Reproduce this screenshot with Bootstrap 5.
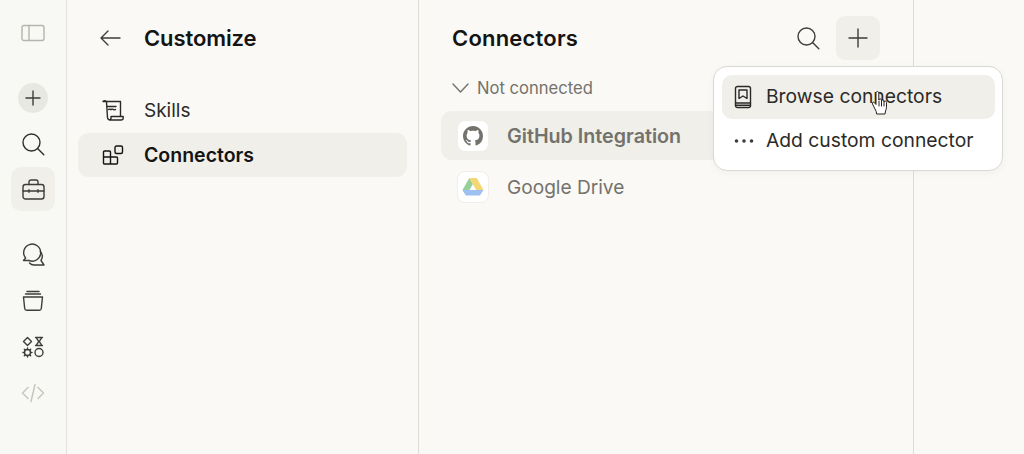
<!doctype html>
<html lang="en"><head><meta charset="utf-8"><title>Customize</title>
<link href="https://cdn.jsdelivr.net/npm/bootstrap@5.3.0/dist/css/bootstrap.min.css" rel="stylesheet">
<style>
html,body{height:100%}
body{background:#faf9f5;font-family:Inter,"Noto Sans",sans-serif;color:#1f1e1d;overflow:hidden}
svg{fill:none;stroke:currentColor;stroke-width:1.4;stroke-linecap:round;stroke-linejoin:round;display:block;flex:none}
.shell{height:454px;width:1024px}
.rail{width:67px;background:#f8f8f4;border-right:1px solid #e4e3dd;padding-top:16px;color:#3d3d3a}
.rail-slot{height:46px}
.rail-btn{width:44px;height:44px;border-radius:10px}
.rail-btn.active-rail{background:#f0efe9}
.plus-round{width:30px;height:30px;border-radius:50%;background:#e8e8e3;margin-top:34px;margin-bottom:8px}
.panel-a{width:352px;border-right:1px solid #dedcd5;padding:0 11px}
.panel-b{width:495px;border-right:1px solid #dedcd5;padding:0 33px}
.head-a{height:76px;padding-left:22px;gap:23px}
.head-title{font-size:22px;font-weight:600;color:#141413}
.title-wide{letter-spacing:.2px}
.title-tight{letter-spacing:-.1px}
.nav-row{height:44px;border-radius:11px;padding-left:24px;gap:20px;font-size:19px;color:#2b2a28;margin-bottom:1px}
.nav-row span{padding-top:2px}
.nav-row.on{background:#f0efe9;font-weight:600;color:#141413;font-size:19.500px}
.first-row{margin-top:12px}
.head-b{height:76px}
.tool-btn{width:44px;height:44px;border-radius:9px;color:#3d3d3a}
.tool-btn.on{background:#f0efe9}
.group-label{height:24px;font-size:16.600px;color:#73726c;gap:8px}
.conn{height:49px;border-radius:11px;padding-left:17px;gap:17px;font-size:19.100px;color:#73726c;margin-left:-11px;margin-right:-33px}
.conn span{padding-top:3px}
.conn.on{background:#f0efe9;font-weight:600;font-size:19.700px;margin-top:11px}
.conn.off{margin-top:2px}
.conn.off span{padding-top:1px}
.logo-box{width:32px;height:32px;border-radius:8px;background:#fff;border:1px solid #efeee9;margin-left:-1px;margin-right:1px}
.pop{position:absolute;left:713px;top:66px;width:290px;height:105px;background:#fff;border:1px solid #d9d8d2;border-radius:14px;padding:8px 7px 8px 8px;box-shadow:0 2px 8px rgba(0,0,0,.04)}
.pop-row{height:44px;border-radius:10px;padding-left:12px;font-size:19.300px;color:#2b2a28}
.pop-row.on{background:#f0efe9}
.pop-row span{margin-left:14px;padding-bottom:2px}
.pop-row.more span{margin-left:12px}
.more svg{fill:#3d3d3a;stroke:none}
.cursor{position:absolute;left:871px;top:90px;color:#222;stroke-width:1}
.cursor .hand{fill:#fff}
</style></head>
<body>
<div class="shell d-flex">
  <aside class="rail d-flex flex-column align-items-center flex-shrink-0">
    <div class="d-flex align-items-center justify-content-center" style="height:33px;color:#b5b4ae"><svg width="24" height="18" viewBox="0 0 24 18"><rect x="1" y="1.500" width="22" height="15" rx="2"/><path d="M8 1.500v15"/></svg></div>
    <div class="plus-round d-flex align-items-center justify-content-center"><svg width="16" height="16" viewBox="0 0 16 16"><path d="M8 1v14M1 8h14"/></svg></div>
    <div class="rail-slot d-flex align-items-center justify-content-center" style="color:#2f2f2c"><svg width="24" height="24" viewBox="0 0 24 24"><circle cx="10.500" cy="10.500" r="8.500"/><path d="M16.800 16.800l6 6"/></svg></div>
    <div class="rail-btn active-rail d-flex align-items-center justify-content-center"><svg width="23" height="21" viewBox="0 0 23 21"><rect x="1" y="5.500" width="21" height="14.500" rx="2.500"/><path d="M7 5.500V3a2 2 0 0 1 2-2h5a2 2 0 0 1 2 2v2.500M1 12h21M7 10.800v2.400M16 10.800v2.400"/></svg></div>
    <div class="rail-slot d-flex align-items-center justify-content-center" style="margin-top:21px"><svg width="24" height="24" viewBox="0 0 24 24"><path d="M4.600 15A8.500 8.500 0 1 1 8 17.500H2.500z"/><path d="M19.300 8.500A7.500 7.500 0 0 1 20 17.500L23 22H13A6 6 0 0 1 8.500 20"/></svg></div>
    <div class="rail-slot d-flex align-items-center justify-content-center"><svg width="22" height="22" viewBox="0 0 22 22"><path d="M5 1.500h12M3.500 4h15"/><path d="M1.500 7h19l-1.200 11.500a2 2 0 0 1-2 1.800H4.700a2 2 0 0 1-2-1.800z"/></svg></div>
    <div class="rail-slot d-flex align-items-center justify-content-center"><svg width="22" height="22" viewBox="0 0 22 22"><path d="M5.500 1.500l4 4-4 4-4-4zM13.500 1.500h7M13.500 9.500h7M14.500 1.500c0 2 2 2.500 2 4s-2 2-2 4M19.500 1.500c0 2-2 2.500-2 4s2 2 2 4"/><circle cx="17" cy="16.500" r="4"/><circle cx="5.500" cy="16.500" r="3"/><path d="M5.500 12v1.500M5.500 19.500V21M1 16.500h1.500M8.500 16.500H10M2.300 13.300l1 1M7.700 18.700l1 1M2.300 19.700l1-1M7.700 14.300l1-1"/></svg></div>
    <div class="rail-slot d-flex align-items-center justify-content-center" style="color:#c4c3bd"><svg width="24" height="20" viewBox="0 0 24 20"><path d="M7 4.500L1.500 10 7 15.500M17 4.500l5.500 5.500-5.500 5.500M14 1.500l-4 17"/></svg></div>
  </aside>

  <section class="panel-a flex-shrink-0">
    <div class="head-a d-flex align-items-center">
      <svg width="21" height="16" viewBox="0 0 21 16" style="color:#3d3d3a"><path d="M20 8H1M8 1L1 8l7 7"/></svg>
      <div class="head-title title-tight">Customize</div>
    </div>
    <div class="nav-row first-row d-flex align-items-center"><svg width="22" height="22" viewBox="0 0 22 22"><path d="M1 2.500c1-1.200 3-1.200 3.500.5L5.500 18.500c.1 1.700 1.500 2.500 3 2.500h10.500c1.500 0 2.200-1 2.200-2v-1.500H9v1.500c0 1-.7 2-1.800 2M1 2.500h17.500v15M5 7.500h9M6.500 10.500c1-1 1.500 0 2.500 0s1.500-1 2.500 0 1.500 0 2 0"/></svg><span>Skills</span></div>
    <div class="nav-row on d-flex align-items-center"><svg width="22" height="20" viewBox="0 0 22 20"><path d="M2.500 6h5a1 1 0 0 1 1 1v5h6a1 1 0 0 1 1 1v5a1 1 0 0 1-1 1h-12a1 1 0 0 1-1-1V7a1 1 0 0 1 1-1zM1.500 12h7M8.500 12v7"/><rect x="13" y="1" width="7.500" height="7.500" rx="1.500"/></svg><span>Connectors</span></div>
  </section>

  <section class="panel-b flex-shrink-0">
    <div class="head-b d-flex align-items-center justify-content-between">
      <div class="head-title title-wide">Connectors</div>
      <div class="d-flex align-items-center" style="gap:6px">
        <div class="tool-btn d-flex align-items-center justify-content-center"><svg width="24" height="24" viewBox="0 0 24 24"><circle cx="10.500" cy="10.500" r="8.500"/><path d="M16.800 16.800l6 6"/></svg></div>
        <div class="tool-btn on d-flex align-items-center justify-content-center"><svg width="20" height="20" viewBox="0 0 20 20"><path d="M10 1v18M1 10h18"/></svg></div>
      </div>
    </div>
    <div class="group-label d-flex align-items-center"><svg width="17" height="10" viewBox="0 0 17 10"><path d="M1 1l7.500 8L16 1"/></svg><span>Not connected</span></div>
    <div class="conn on d-flex align-items-center"><div class="logo-box d-flex align-items-center justify-content-center"><svg width="20" height="20" viewBox="0 0 16 16" style="fill:#73726c;stroke:none"><path d="M8 0C3.580 0 0 3.580 0 8c0 3.540 2.290 6.530 5.470 7.590.4.070.55-.17.550-.38 0-.19-.01-.82-.01-1.490-2.010.37-2.530-.49-2.690-.94-.09-.23-.48-.94-.82-1.130-.28-.15-.68-.52-.01-.53.630-.01 1.080.58 1.230.82.720 1.210 1.870.870 2.330.660.070-.520.280-.870.510-1.070-1.780-.2-3.640-.890-3.640-3.950 0-.870.310-1.590.820-2.150-.08-.2-.36-1.020.080-2.120 0 0 .67-.21 2.200.820.640-.18 1.320-.27 2-.27s1.360.090 2 .270c1.530-1.040 2.200-.820 2.200-.820.440 1.100.160 1.920.080 2.120.510.560.820 1.270.820 2.150 0 3.070-1.870 3.750-3.650 3.950.290.250.540.730.540 1.480 0 1.070-.01 1.930-.01 2.200 0 .210.150.460.550.380A8.010 8.010 0 0 0 16 8c0-4.420-3.580-8-8-8z"/></svg></div><span>GitHub Integration</span></div>
    <div class="conn off d-flex align-items-center"><div class="logo-box d-flex align-items-center justify-content-center"><svg width="22" height="19" viewBox="0 0 22 19" style="stroke:none"><path d="M7.300 1L.5 13l3.600 5.500L11 7z" fill="#97cf9a"/><path d="M7.300 1h7.400l6.800 12h-7.300z" fill="#f4d774"/><path d="M.5 13h21l-3.600 5.500H4.100z" fill="#9dbff2"/></svg></div><span>Google Drive</span></div>
  </section>
</div>

<div class="pop">
  <div class="pop-row on d-flex align-items-center"><svg width="18" height="24" viewBox="0 0 18 24"><rect x="1.500" y="1.500" width="15" height="21" rx="2"/><path d="M1.500 18h15M1.500 20.200h15M5 5h8v8.500l-4-2.500-4 2.500z"/></svg><span>Browse connectors</span></div>
  <div class="pop-row more d-flex align-items-center"><svg width="20" height="6" viewBox="0 0 20 6"><circle cx="2.500" cy="3" r="1.800"/><circle cx="10" cy="3" r="1.800"/><circle cx="17.500" cy="3" r="1.800"/></svg><span>Add custom connector</span></div>
</div>
<svg class="cursor" width="18" height="26" viewBox="0 0 18 26"><path class="hand" d="M5 21L1.500 14c-.7-1.500 1-2.500 2-1.300L5 14.500V3c0-2 2.800-2 2.800 0v7c0-1.500 2.700-1.500 2.700 0v1c0-1.500 2.500-1.500 2.500 0v1c0-1.200 2.500-1.200 2.500.3v5c0 1.500-.7 2.700-1 3.700l-.5 3H6z"/><path d="M8 11v5M10.500 11v5M13 12v4"/></svg>
<script src="https://cdn.jsdelivr.net/npm/bootstrap@5.3.0/dist/js/bootstrap.bundle.min.js"></script>
</body></html>
